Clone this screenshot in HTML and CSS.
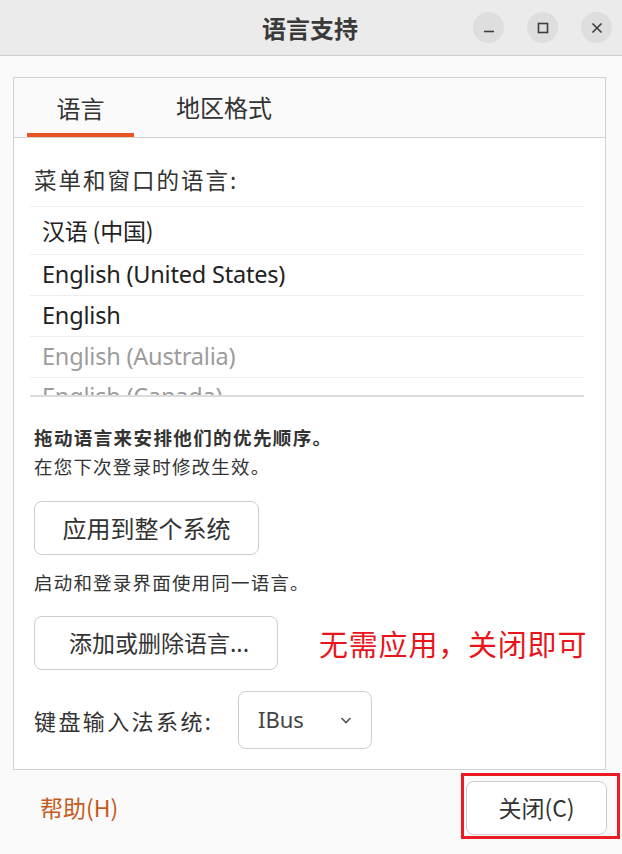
FILE: index.html
```html
<!DOCTYPE html>
<html lang="zh-CN">
<head>
<meta charset="utf-8">
<link rel="stylesheet" href="styles.css">
</head>
<body>
<div class="window">
  <header class="titlebar">
    <div class="title">语言支持</div>
    <div class="wbtns">
      <span class="wbtn"><svg width="14" height="14" viewBox="0 0 14 14"><path d="M2 10.5h10" stroke="#3c3c3c" stroke-width="1.6"/></svg></span>
      <span class="wbtn"><svg width="14" height="14" viewBox="0 0 14 14"><rect x="2.5" y="2.5" width="9" height="9" fill="none" stroke="#3c3c3c" stroke-width="1.6"/></svg></span>
      <span class="wbtn"><svg width="14" height="14" viewBox="0 0 14 14"><path d="M2.5 2.5l9 9M11.5 2.5l-9 9" stroke="#3c3c3c" stroke-width="1.6"/></svg></span>
    </div>
  </header>
  <main class="body">
    <section class="frame">
      <nav class="tabs">
        <div class="tab active">语言</div>
        <div class="tab">地区格式</div>
      </nav>
      <div class="panel">
        <div class="label">菜单和窗口的语言:</div>
        <div class="list">
          <div class="row first">汉语 (中国)</div>
          <div class="row">English (United States)</div>
          <div class="row">English</div>
          <div class="row dim">English (Australia)</div>
          <div class="row dim cut">English (Canada)</div>
        </div>
        <div class="hint bold">拖动语言来安排他们的优先顺序。</div>
        <div class="hint">在您下次登录时修改生效。</div>
        <button class="btn apply">应用到整个系统</button>
        <div class="hint s2">启动和登录界面使用同一语言。</div>
        <div class="addrow">
          <button class="btn add">添加或删除语言...</button>
          <span class="note">无需应用，关闭即可</span>
        </div>
        <div class="kbrow">
          <span class="kblabel">键盘输入法系统:</span>
          <div class="select">
            <span>IBus</span>
            <svg width="14" height="14" viewBox="0 0 14 14"><path d="M2.5 5l4.5 4.5L11.5 5" fill="none" stroke="#555" stroke-width="1.6"/></svg>
          </div>
        </div>
      </div>
    </section>
    <footer class="foot">
      <span class="help">帮助(H)</span>
      <div class="closewrap"><button class="btn close">关闭(C)</button></div>
    </footer>
  </main>
</div>
</body>
</html>
```
FILE: styles.css
```css
* { box-sizing: border-box; }
html, body { margin: 0; padding: 0; }
body {
  width: 622px; height: 854px; overflow: hidden;
  font-family: "Noto Sans CJK SC", "Noto Sans", sans-serif;
  background: #fafafa;
  color: #303030;
}
.window { width: 622px; height: 854px; display: flex; flex-direction: column; }
.titlebar {
  height: 56px; flex-shrink: 0; background: #ebebeb; border-bottom: 1px solid #d0d0d0;
  position: relative; display: flex; align-items: center; justify-content: flex-end;
  padding-right: 10px;
}
.title {
  position: absolute; left: 0; right: 0; top: 0; bottom: 0;
  display: flex; align-items: center; justify-content: center;
  font-size: 24px; font-weight: 700; color: #3a3a3a; padding-right: 2px;
}
.wbtns { display: flex; gap: 23px; position: relative; }
.wbtn {
  width: 31px; height: 31px; border-radius: 50%; background: #dedede;
  display: flex; align-items: center; justify-content: center;
}
.body { flex: 1; padding: 21px 16px 0 13px; display: flex; flex-direction: column; }
.frame {
  height: 693px; flex-shrink: 0; border: 1px solid #d2d2d2; background: #fff;
  display: flex; flex-direction: column; overflow: hidden;
}
.tabs {
  height: 60px; flex-shrink: 0; background: #fafafa; border-bottom: 1px solid #d2d2d2;
  display: flex; padding-left: 13px;
}
.tab {
  font-size: 24px; color: #333; display: flex; align-items: center;
  padding: 0 30px; height: 100%; padding-bottom: 2px;
}
.tab.active { border-bottom: 4px solid #e95420; padding: 4px 0 0 0; width: 107px; justify-content: center; }
.tab + .tab { padding-left: 42px; }
.panel { padding: 26px 20px 0 20px; }
.label { font-size: 22.5px; line-height: 30px; color: #333; letter-spacing: 2px; }
.list {
  margin: 12px 1px 0 -4px; border-top: 1px solid #f0f0f0;
  height: 191px; overflow: hidden; border-bottom: 2px solid #dcdcdc;
}
.row {
  height: 41px; flex-shrink: 0; border-bottom: 1px solid #efefef; display: flex; align-items: center;
  padding-left: 12px; padding-bottom: 3px; font-size: 23.5px; color: #222;
  font-family: "Noto Sans", "Noto Sans CJK SC", sans-serif; letter-spacing: -0.2px;
}
.row.first { height: 48px; font-family: "Noto Sans CJK SC", sans-serif; font-size: 23px; padding-bottom: 2px; }
.row.dim { color: #9c9c9c; }
.row.cut { align-items: flex-start; padding-top: 2px; }
.hint { font-size: 18.5px; line-height: 29px; color: #333; letter-spacing: 1.2px; white-space: nowrap; }
.hint.bold { font-weight: 700; margin-top: 26px; letter-spacing: 1.4px; }
.hint.s2 { margin-top: 13px; }
.btn {
  font-family: inherit; font-size: 24px; color: #333; background: #fff;
  border: 1px solid #cdcdcd; border-radius: 8px; padding: 0; cursor: default;
}
.apply { display: block; width: 225px; height: 54px; margin-top: 20px; padding-bottom: 2px; }
.addrow { display: flex; align-items: center; margin-top: 19px; }
.add { width: 244px; height: 54px; flex-shrink: 0; font-size: 23px; padding-left: 6px; padding-bottom: 2px; }
.note { color: #e8161c; font-size: 29px; margin-left: 41px; letter-spacing: 0.8px; white-space: nowrap; }
.kbrow { display: flex; align-items: center; margin-top: 21px; }
.kblabel { font-size: 22px; color: #333; width: 204px; letter-spacing: 2.4px; white-space: nowrap; }
.select {
  width: 134px; height: 58px; border: 1px solid #d0d0d0; border-radius: 8px;
  display: flex; align-items: center; justify-content: space-between; padding: 0 18px 0 19px;
  font-family: "Noto Sans", sans-serif; font-size: 22px; color: #444;
}
.select span { margin-top: -3px; }
.foot { display: flex; align-items: flex-start; justify-content: space-between; padding-top: 3px; }
.help { color: #c65b22; font-size: 23px; line-height: 28px; margin-left: 27px; margin-top: 20px; }
.closewrap { border: 3px solid #ec1c24; padding: 5px 10px 1px 2px; margin-right: -14px; }
.close { display: block; width: 141px; height: 54px; font-size: 23px; padding-bottom: 2px; }
```
